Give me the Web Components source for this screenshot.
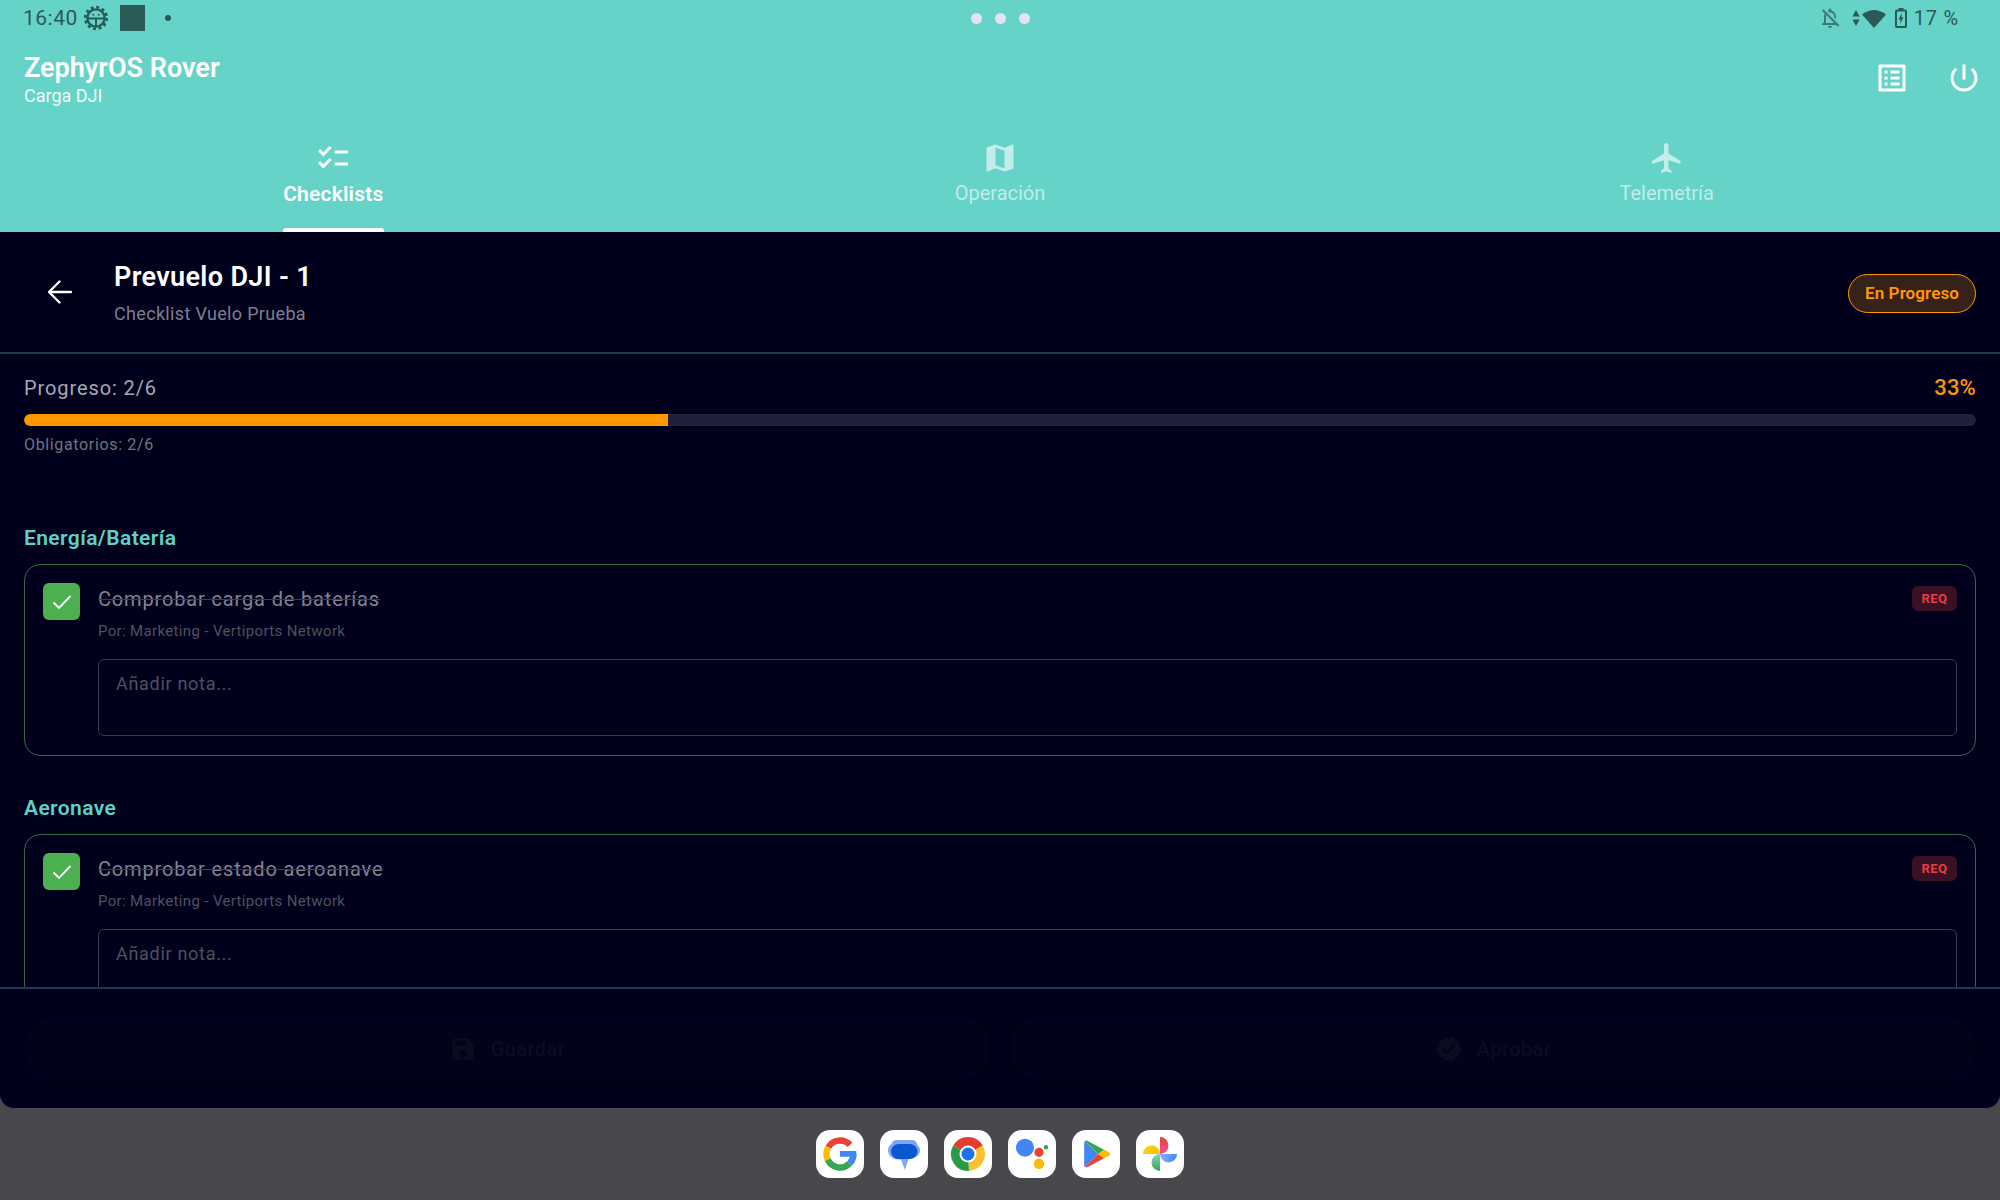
<!DOCTYPE html>
<html lang="es">
<head>
<meta charset="utf-8">
<title>ZephyrOS Rover</title>
<style>
html,body{margin:0;height:100%;overflow:hidden}
body{background:#48474c;font-family:Roboto,"Liberation Sans",sans-serif}
</style>
</head>
<body>
<app-shell>
  <status-bar></status-bar>
  <app-header title="ZephyrOS Rover" sub="Carga DJI"></app-header>
  <tab-bar>
    <tab-item active icon="M22 7h-9v2h9V7zm0 8h-9v2h9v-2zM5.54 11L2 7.46l1.41-1.41 2.12 2.12 4.24-4.24 1.41 1.41L5.54 11zm0 8L2 15.46l1.41-1.41 2.12 2.12 4.24-4.24 1.41 1.41L5.54 19z">Checklists</tab-item>
    <tab-item icon="M20.5 3l-.16.03L15 5.1 9 3 3.36 4.9c-.21.07-.36.25-.36.48V20.5c0 .28.22.5.5.5l.16-.03L9 18.9l6 2.1 5.64-1.9c.21-.07.36-.25.36-.48V3.5c0-.28-.22-.5-.5-.5zM15 19l-6-2.11V5l6 2.11V19z">Operación</tab-item>
    <tab-item icon="M21 16v-2l-8-5V3.5c0-.83-.67-1.5-1.5-1.5S10 2.67 10 3.5V9l-8 5v2l8-2.5V19l-2 1.5V22l3.5-1 3.5 1v-1.5L13 19v-5.5l8 2.5z">Telemetría</tab-item>
  </tab-bar>
  <detail-panel>
    <detail-header title="Prevuelo DJI - 1" sub="Checklist Vuelo Prueba" state="En Progreso"></detail-header>
    <scroll-area>
      <progress-info done="2" total="6" percent="33" req="2"></progress-info>
      <check-section name="Energía/Batería">
        <check-card by="Por: Marketing - Vertiports Network">Comprobar carga de baterías</check-card>
      </check-section>
      <check-section name="Aeronave">
        <check-card by="Por: Marketing - Vertiports Network">Comprobar estado aeroanave</check-card>
      </check-section>
    </scroll-area>
    <footer-bar>
      <action-button icon="M17 3H5c-1.11 0-2 .9-2 2v14c0 1.1.89 2 2 2h14c1.1 0 2-.9 2-2V7l-4-4zm-5 16c-1.66 0-3-1.34-3-3s1.34-3 3-3 3 1.34 3 3-1.34 3-3 3zm3-10H5V5h10v4z">Guardar</action-button>
      <action-button icon="M23 12l-2.44-2.79.34-3.69-3.61-.82-1.89-3.2L12 2.96 8.6 1.5 6.71 4.69 3.1 5.5l.34 3.7L1 12l2.44 2.79-.34 3.7 3.61.82L8.6 22.5l3.4-1.47 3.4 1.46 1.89-3.19 3.61-.82-.34-3.69L23 12zm-12.91 4.72l-3.8-3.81 1.48-1.48 2.32 2.33 5.85-5.87 1.48 1.48-7.33 7.35z">Aprobar</action-button>
    </footer-bar>
  </detail-panel>
  <dock-bar></dock-bar>
</app-shell>

<script>
class AppShell extends HTMLElement {
  constructor(){ super(); this.attachShadow({mode:'open'});
    this.shadowRoot.innerHTML = `
<style>
:host{display:flex;flex-direction:column;height:1200px;width:2000px}
.top{background:#66d3c8;border-bottom:1px solid #a8b8ba;height:231px;display:flex;flex-direction:column;flex:none}
</style>
<div class="top"><slot id="t"></slot></div>
<slot name="panel"></slot>
<slot name="dock"></slot>`
  }
  connectedCallback(){
    this.querySelector("detail-panel").slot = "panel";
    this.querySelector("dock-bar").slot = "dock";
  }
}
customElements.define('app-shell',AppShell)

class StatusBar extends HTMLElement {
  constructor(){ super(); this.attachShadow({mode:'open'});
    this.shadowRoot.innerHTML = `
<style>
:host{display:grid;grid-template-columns:1fr auto 1fr;align-items:center;height:36px;padding:0 41px;color:#2a5a55;font-size:21px;letter-spacing:.5px;flex:none}
.l,.r{display:flex;align-items:center}
.l{margin-left:-18px}
.r{justify-content:flex-end}
.c{display:flex;gap:13px}
.c i{width:11px;height:11px;border-radius:50%;background:#e6e1f0}
.sq{width:25px;height:26px;background:#2a5a55;margin-left:11px}
.dot{width:6px;height:6px;border-radius:50%;background:#2a5a55;margin-left:20px}
.pct{margin-left:7px;font-size:20px;letter-spacing:.8px}
svg{display:block;fill:#2a5a55}
</style>
<div class="l">
  <span>16:40</span>
  <svg width="26" height="26" viewBox="0 0 24 24" style="margin-left:5px">
    <circle cx="12" cy="12" r="8" fill="none" stroke="#2a5a55" stroke-width="2.2"/>
    <circle cx="12" cy="12" r="10" fill="none" stroke="#2a5a55" stroke-width="2.4" stroke-dasharray="2.7 2.53"/>
    <path d="M4 12.5h16M12 12v8" fill="none" stroke="#2a5a55" stroke-width="1.8"/>
    <circle cx="9.5" cy="9" r=".9"/><circle cx="14.5" cy="9" r=".9"/>
  </svg>
  <div class="sq"></div>
  <div class="dot"></div>
</div>
<div class="c"><i></i><i></i><i></i></div>
<div class="r">
  <svg width="24" height="24" viewBox="0 0 24 24" style="opacity:.72"><path d="M12 22c1.1 0 2-.9 2-2h-4c0 1.1.9 2 2 2zm0-15.5c2.49 0 4 2.02 4 4.5v.1l2 2V11c0-3.07-1.63-5.64-4.5-6.32V4c0-.83-.67-1.5-1.5-1.5s-1.5.67-1.5 1.5v.68c-.24.06-.47.15-.69.23l1.64 1.64c.18-.02.36-.05.55-.05zM5.41 3.35L4 4.76l2.81 2.81C6.29 8.57 6 9.74 6 11v5l-2 2v1h14.24l1.74 1.74 1.41-1.41L5.41 3.35zM16 17H8v-6c0-.68.12-1.32.34-1.9L16 16.76V17z"/></svg>
  <svg width="8" height="16" viewBox="0 0 8 16" style="margin-left:10px"><path d="M4 0l3.6 6.6H.4zM4 16L.4 9.4h7.2z"/></svg>
  <svg width="24" height="19" viewBox="0 0 24 19" style="margin-left:2px"><path d="M0 5.5Q12-3.5 24 5.5L12 19z"/></svg>
  <svg width="12" height="20" viewBox="0 0 12 20" style="margin-left:9px"><path d="M3.5 0h5v1.5H10A2 2 0 0 1 12 3.500V18a2 2 0 0 1-2 2H2a2 2 0 0 1-2-2V3.500A2 2 0 0 1 2 1.500H3.500zM2 3.500V18h8V3.500z"/><path d="M6.800 5L3.500 11.500h2L5 16l3.500-6.800h-2z"/></svg>
  <span class="pct">17 %</span>
</div>`
  }
}
customElements.define('status-bar',StatusBar)

class AppHeader extends HTMLElement {
  constructor(){ super(); this.attachShadow({mode:'open'});
    this.shadowRoot.innerHTML = `
<style>
:host{display:flex;justify-content:space-between;align-items:flex-start;height:94px;padding:0 18px 0 24px;color:#fff;flex:none}
.t{font-size:27px;font-weight:600;line-height:30px;margin-top:17px}
.s{font-size:18px;line-height:22px;margin-top:2px;color:#f0fbf9}
.a{display:flex;gap:36px;margin-top:24px}
svg{display:block;fill:#fff}
</style>
<div>
  <div class="t">${this.getAttribute("title")}</div>
  <div class="s">${this.getAttribute("sub")}</div>
</div>
<div class="a">
  <svg width="36" height="36" viewBox="0 0 24 24"><path d="M19 5v14H5V5h14m1.100-2H3.900c-.5 0-.9.4-.9.9v16.200c0 .4.4.9.9.9h16.200c.4 0 .9-.5.9-.9V3.900c0-.5-.5-.9-.9-.9zM11 7h6v2h-6V7zm0 4h6v2h-6v-2zm0 4h6v2h-6zM7 7h2v2H7zm0 4h2v2H7zm0 4h2v2H7z"/></svg>
  <svg width="36" height="36" viewBox="0 0 24 24"><path d="M13 3h-2v10h2V3zm4.830 2.170l-1.420 1.420C17.990 7.860 19 9.810 19 12c0 3.870-3.130 7-7 7s-7-3.130-7-7c0-2.190 1.010-4.140 2.580-5.420L6.170 5.170C4.230 6.820 3 9.260 3 12c0 4.970 4.030 9 9 9s9-4.030 9-9c0-2.740-1.230-5.180-3.170-6.830z"/></svg>
</div>`
  }
}
customElements.define('app-header',AppHeader)

class TabBar extends HTMLElement {
  constructor(){ super(); this.attachShadow({mode:'open'});
    this.shadowRoot.innerHTML = `
<style>:host{display:grid;grid-template-columns:1fr 1fr 1fr;flex:1;min-height:0}</style><slot></slot>`
  }
}
customElements.define('tab-bar',TabBar)

class TabItem extends HTMLElement {
  constructor(){ super(); this.attachShadow({mode:'open'});
    this.shadowRoot.innerHTML = `
<style>
:host{display:flex;justify-content:center;color:rgba(255,255,255,.6);font-size:20px}
:host([active]){color:#fff;font-weight:600;font-size:21px;letter-spacing:.2px}
.in{display:flex;flex-direction:column;align-items:center;height:100%;padding-top:10px;box-sizing:border-box}
svg{display:block;fill:currentColor}
.lb{line-height:24px;margin-top:5px}
:host([active]) .lb{margin-top:6px}
.bar{margin-top:auto;margin-bottom:-1px;width:100%;height:4px;border-radius:3px 3px 0 0}
:host([active]) .bar{background:#fff}
</style>
<div class="in">
  <svg width="36" height="36" viewBox="0 0 24 24"><path d="${this.getAttribute("icon")}"/></svg>
  <div class="lb"><slot></slot></div>
  <div class="bar"></div>
</div>`
  }
}
customElements.define('tab-item',TabItem)

class DetailPanel extends HTMLElement {
  constructor(){ super(); this.attachShadow({mode:'open'});
    this.shadowRoot.innerHTML = `
<style>
:host{display:flex;flex-direction:column;height:876px;flex:none;background:#00001c;border-radius:0 0 14px 14px;overflow:hidden}
</style><slot></slot>`
  }
}
customElements.define('detail-panel',DetailPanel)

class DetailHeader extends HTMLElement {
  constructor(){ super(); this.attachShadow({mode:'open'});
    this.shadowRoot.innerHTML = `
<style>
:host{display:flex;align-items:center;height:122px;box-sizing:border-box;border-bottom:2px solid #24384f;padding:0 24px 0 48px;flex:none}
svg{display:block;margin-right:42px}
.m{flex:1}
.t{color:#fff;font-size:27px;font-weight:600;line-height:30px;letter-spacing:.35px;margin-top:2px}
.s{color:#7f7f8c;font-size:18px;line-height:22px;letter-spacing:.33px;margin-top:11px}
.b{height:39px;box-sizing:border-box;width:128px;display:flex;align-items:center;justify-content:center;border:1.5px solid #ff9800;border-radius:20px;background:#36221a;color:#ff9800;font-size:17px;font-weight:600;letter-spacing:.1px;margin-top:2px}
</style>
<svg width="24" height="24" viewBox="0 0 24 24" fill="none" stroke="#fff" stroke-width="2.4" stroke-linecap="round" stroke-linejoin="round"><path d="M23 12H1.500M11.500 1.500L1 12l10.500 10.500"/></svg>
<div class="m">
  <div class="t">${this.getAttribute("title")}</div>
  <div class="s">${this.getAttribute("sub")}</div>
</div>
<div class="b">${this.getAttribute("state")}</div>`
  }
}
customElements.define('detail-header',DetailHeader)

class ScrollArea extends HTMLElement {
  constructor(){ super(); this.attachShadow({mode:'open'});
    this.shadowRoot.innerHTML = `
<style>:host{display:block;flex:1;min-height:0;overflow:hidden;padding:0 24px}</style><slot></slot>`
  }
}
customElements.define('scroll-area',ScrollArea)

class ProgressInfo extends HTMLElement {
  constructor(){ super(); this.attachShadow({mode:'open'});
    let a = this.getAttribute.bind(this);
    this.shadowRoot.innerHTML = `
<style>
:host{display:block;padding-top:22px}
.row{display:flex;justify-content:space-between;line-height:24px;font-size:20px;letter-spacing:.9px;color:#a8a8b2}
.p{color:#ff9800;font-size:22px;font-weight:500;letter-spacing:.2px}
.track{height:12px;border-radius:6px;background:#20203a;margin-top:14px;overflow:hidden}
.fill{height:100%;width:${a("percent")}%;background:#ff9800;border-radius:6px 0 0 6px}
.ob{font-size:16px;line-height:20px;letter-spacing:.65px;color:#737380;margin-top:9px}
</style>
<div class="row"><span>Progreso: ${a("done")}/${a("total")}</span><span class="p">${a("percent")}%</span></div>
<div class="track"><div class="fill"></div></div>
<div class="ob">Obligatorios: ${a("req")}/${a("total")}</div>`
  }
}
customElements.define('progress-info',ProgressInfo)

class CheckSection extends HTMLElement {
  constructor(){ super(); this.attachShadow({mode:'open'});
    this.shadowRoot.innerHTML = `
<style>
:host{display:block;padding-top:71px}
:host(:last-child){padding-top:40px}
.h{color:#5ed2c6;font-size:21px;font-weight:600;line-height:24px;letter-spacing:.4px;margin-bottom:14px}
</style>
<div class="h">${this.getAttribute("name")}</div>
<slot></slot>`
  }
}
customElements.define('check-section',CheckSection)

class CheckCard extends HTMLElement {
  constructor(){ super(); this.attachShadow({mode:'open'});
    this.shadowRoot.innerHTML = `
<style>
:host{display:flex;gap:18px;box-sizing:border-box;height:192px;border:1.5px solid #2e6b3e;border-radius:16px;padding:18px}
.box{width:37px;height:37px;border-radius:6px;background:#4caf50;display:flex;align-items:center;justify-content:center;flex:none}
.m{flex:1;min-width:0}
.row{display:flex;justify-content:space-between}
.t{color:#84848e;font-size:20px;line-height:28px;letter-spacing:.85px;text-decoration:line-through;text-decoration-color:#40403a;text-decoration-thickness:1px;margin-top:2px}
.req{width:45px;height:25px;border-radius:6px;background:#3a1024;color:#e53e45;font-size:13px;font-weight:700;letter-spacing:.5px;display:flex;align-items:center;justify-content:center;margin-top:3px}
.by{color:#50505e;font-size:15px;line-height:20px;letter-spacing:.35px;margin-top:8px}
.note{height:77px;box-sizing:border-box;border:1.5px solid #3a3a50;border-radius:6px;margin-top:18px;padding:13px 17px;color:#50505e;font-size:18px;line-height:22px;letter-spacing:.7px}
</style>
<div class="box"><svg width="22" height="18" viewBox="0 0 22 18" fill="none" stroke="#fff" stroke-width="1.9"><path d="M2.500 9.500l5.500 5.500L19.500 3"/></svg></div>
<div class="m">
  <div class="row"><div class="t"><slot></slot></div><div class="req">REQ</div></div>
  <div class="by">${this.getAttribute("by")}</div>
  <div class="note">Añadir nota...</div>
</div>`
  }
}
customElements.define('check-card',CheckCard)

class FooterBar extends HTMLElement {
  constructor(){ super(); this.attachShadow({mode:'open'});
    this.shadowRoot.innerHTML = `
<style>
:host{display:grid;grid-template-columns:1fr 1fr;gap:20px;box-sizing:border-box;height:121px;border-top:2px solid #24384f;padding:27px 24px 27px;flex:none}
</style><slot></slot>`
  }
}
customElements.define('footer-bar',FooterBar)

class ActionButton extends HTMLElement {
  constructor(){ super(); this.attachShadow({mode:'open'});
    this.shadowRoot.innerHTML = `
<style>
:host{display:flex;align-items:center;justify-content:center;gap:14px;border-radius:33px;background:#02021a;color:#0c0c1f;font-size:20px;font-weight:500;letter-spacing:.4px}
svg{display:block;fill:currentColor}
</style>
<svg width="28" height="28" viewBox="0 0 24 24"><path d="${this.getAttribute("icon")}"/></svg><slot></slot>`
  }
}
customElements.define('action-button',ActionButton)

class DockBar extends HTMLElement {
  constructor(){ super(); this.attachShadow({mode:'open'});
    this.shadowRoot.innerHTML = `
<style>
:host{display:flex;justify-content:center;gap:16px;padding-top:22px;flex:none;height:92px;box-sizing:border-box}
.i{width:48px;height:48px;border-radius:14px;background:#fff}
svg{display:block}
</style>
<div class="i"><svg width="48" height="48" viewBox="0 0 48 48" fill="none" stroke-width="6.400">
  <path stroke="#ea4335" d="M34.030 14.970A13.500 13.500 0 0 0 12.310 17.250"/>
  <path stroke="#fbbc05" d="M12.310 17.250A13.500 13.500 0 0 0 11.760 29.700"/>
  <path stroke="#34a853" d="M11.760 29.700A13.500 13.500 0 0 0 33.550 33.550"/>
  <path stroke="#4285f4" d="M33.550 33.550A13.500 13.500 0 0 0 37.500 24"/>
  <path fill="#4285f4" stroke="none" d="M24 21h16.300v3c0 2-.4 4-1.300 6h-6.500c.8-1 1.200-2 1.400-3.200H24z"/>
</svg></div>
<div class="i"><svg width="48" height="48" viewBox="0 0 48 48">
  <path fill="#7ea6f6" d="M16 10h16c3 0 5 2 5.500 5 1.500 1 2.500 3 2.500 5.500 0 4-3 7-7 7h-1.500c-1.500 0-2.500 1-3.500 2.500L25 40l-4-10.500H18C12 29.500 8 25 8 20c0-3 1.500-5 3.500-6 1-2.500 2.500-4 4.500-4z"/>
  <rect x="11" y="14" width="26.500" height="15" rx="7.500" fill="#0b57d0"/>
</svg></div>
<div class="i"><svg width="48" height="48" viewBox="0 0 48 48">
  <path fill="#e33b2e" d="M24 24L9.280 15.500A17 17 0 0 1 38.720 15.500z"/>
  <path fill="#fbc02d" d="M24 24L38.720 15.500A17 17 0 0 1 25 40.970z"/>
  <path fill="#2b9a47" d="M24 24L25 40.970A17 17 0 0 1 9.280 15.500z"/>
  <circle cx="24" cy="24" r="8.500" fill="#fff"/><circle cx="24" cy="24" r="6.500" fill="#1a73e8"/>
</svg></div>
<div class="i"><svg width="48" height="48" viewBox="0 0 48 48">
  <circle cx="17" cy="17.700" r="9" fill="#4285f4"/><circle cx="31" cy="22.300" r="4.600" fill="#ea4335"/>
  <circle cx="31" cy="33.700" r="5.200" fill="#fbbc05"/><circle cx="38" cy="17.300" r="2.200" fill="#34a853"/>
</svg></div>
<div class="i"><svg width="48" height="48" viewBox="0 0 48 48">
  <path fill="#4285f4" d="M13 11c-.5.400-.8 1-.8 1.800v22.400c0 .8.300 1.400.8 1.800L26 24z"/>
  <path fill="#34a853" d="M13 11c.8-.6 1.800-.6 2.800-.1L32 19.700 26.500 24.500z"/>
  <path fill="#ea4335" d="M13 37c.8.600 1.800.6 2.800.1L32 28.300 26.500 23.500z"/>
  <path fill="#fbbc05" d="M32 19.600l5 2.700c1.400.8 1.400 2.600 0 3.400l-5 2.700L26 24z"/>
</svg></div>
<div class="i"><svg width="48" height="48" viewBox="0 0 48 48">
  <defs>
    <linearGradient id="pr" x1="0" y1="0" x2="0" y2="1"><stop offset="0" stop-color="#ea4335"/><stop offset="1" stop-color="#f4508f"/></linearGradient>
    <linearGradient id="pb" x1="1" y1="0" x2="0" y2="0"><stop offset="0" stop-color="#4285f4"/><stop offset="1" stop-color="#8ab4f8"/></linearGradient>
    <linearGradient id="pg" x1="0" y1="1" x2="0" y2="0"><stop offset="0" stop-color="#34a853"/><stop offset="1" stop-color="#7fd8c0"/></linearGradient>
    <linearGradient id="py" x1="0" y1="0" x2="1" y2="0"><stop offset="0" stop-color="#fbd405"/><stop offset="1" stop-color="#f9c000"/></linearGradient>
  </defs>
  <path fill="url(#pr)" d="M24 7A8.500 8.500 0 0 1 24 24Z"/>
  <path fill="url(#pb)" d="M41 24A8.500 8.500 0 0 1 24 24Z"/>
  <path fill="url(#pg)" d="M24 41A8.500 8.500 0 0 1 24 24Z"/>
  <path fill="url(#py)" d="M7 24A8.500 8.500 0 0 1 24 24Z"/>
</svg></div>`
  }
}
customElements.define('dock-bar',DockBar)
</script>
</body>
</html>
